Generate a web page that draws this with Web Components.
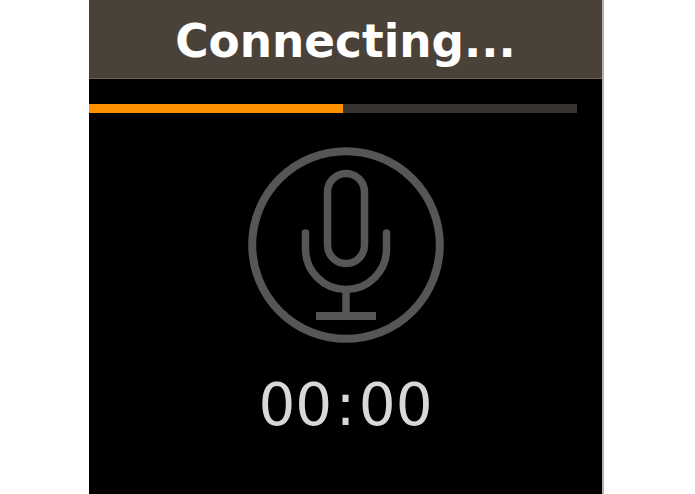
<!DOCTYPE html>
<html>
<head>
<meta charset="utf-8">
<title>Connecting</title>
<style>
    html, body {
        margin: 0;
        height: 100%;
        background: #fff;
        overflow: hidden;
    }
</style>
</head>
<body>
<call-panel>
    <call-header>Connecting...</call-header>
    <call-progress value="52"></call-progress>
    <mic-icon></mic-icon>
    <call-timer>00<span>:</span>00</call-timer>
</call-panel>
<script>
class CallPanel extends HTMLElement {
    constructor() {
        super();
        this.attachShadow({ mode: 'open' });
        this.shadowRoot.innerHTML = `
        <style>
            :host {
                display: flex;
                flex-direction: column;
                box-sizing: content-box;
                width: 513px;
                height: 494px;
                margin-left: 89px;
                background: #000;
                border-right: 2px solid #b5b1a8;
                overflow: hidden;
            }
        </style>
        <slot></slot>
        `;
    }
}

class CallHeader extends HTMLElement {
    constructor() {
        super();
        this.attachShadow({ mode: 'open' });
        this.shadowRoot.innerHTML = `
        <style>
            :host {
                display: flex;
                justify-content: center;
                align-items: center;
                flex: none;
                box-sizing: border-box;
                height: 79px;
                padding-top: 5px;
                background: #4a4238;
                border-bottom: 1px solid #6e6250;
                color: #fff;
                font: bold 45.4px/1 "DejaVu Sans", Verdana, sans-serif;
            }
        </style>
        <slot></slot>
        `;
    }
}

class CallProgress extends HTMLElement {
    constructor() {
        super();
        this.attachShadow({ mode: 'open' });
        this.shadowRoot.innerHTML = `
        <style>
            :host {
                display: block;
                flex: none;
                height: 9px;
                margin: 25px 25px 0 0;
                background: #38332e;
            }
            .fill {
                height: 100%;
                background: #ff9000;
            }
        </style>
        <div class="fill"></div>
        `;
    }

    connectedCallback() {
        this.shadowRoot.querySelector('.fill').style.width = this.getAttribute('value') + '%';
    }
}

class MicIcon extends HTMLElement {
    constructor() {
        super();
        this.attachShadow({ mode: 'open' });
        this.shadowRoot.innerHTML = `
        <style>
            :host {
                display: block;
                flex: none;
                width: 196px;
                height: 196px;
                margin: 34px auto 0;
            }
            svg {
                display: block;
            }
        </style>
        <svg width="196" height="196" viewBox="0 0 196 196" fill="none" stroke="#565656" stroke-width="7.5">
            <circle cx="98" cy="98" r="93.8" stroke-width="8"/>
            <rect x="79.5" y="26.5" width="37" height="90" rx="18.5"/>
            <path d="M57.5 86 V102 A40.5 40.5 0 0 0 138.5 102 V86" stroke-linecap="round"/>
            <path d="M98 143 V166"/>
            <path d="M68 169 H128" stroke-width="8"/>
        </svg>
        `;
    }
}

class CallTimer extends HTMLElement {
    constructor() {
        super();
        this.attachShadow({ mode: 'open' });
        this.shadowRoot.innerHTML = `
        <style>
            :host {
                display: block;
                flex: none;
                margin-top: 27px;
                text-align: center;
                color: #d8d8d8;
                font: 58px/70px "DejaVu Sans", Verdana, sans-serif;
            }
            ::slotted(span) {
                margin: 0 3.5px;
            }
        </style>
        <slot></slot>
        `;
    }
}

customElements.define('call-panel', CallPanel);
customElements.define('call-header', CallHeader);
customElements.define('call-progress', CallProgress);
customElements.define('mic-icon', MicIcon);
customElements.define('call-timer', CallTimer);
</script>
</body>
</html>
